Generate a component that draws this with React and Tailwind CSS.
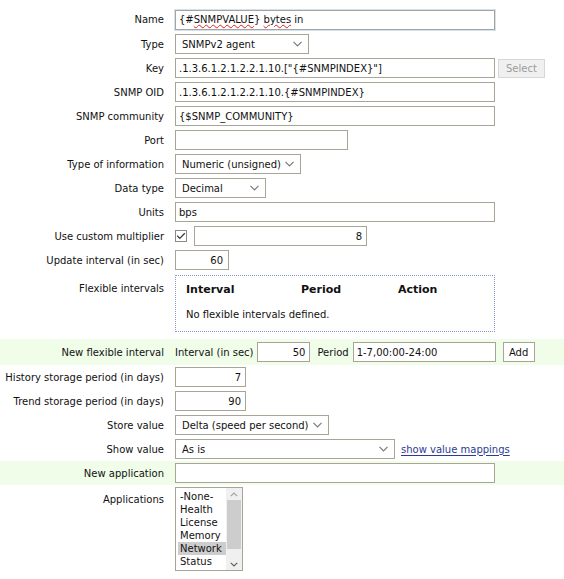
import React from "react";

const inputCls =
  "h-[20px] border border-[#a9a596] bg-white px-[3px] flex items-center text-[#111] whitespace-nowrap overflow-hidden";

function Chevron() {
  return (
    <svg width="9" height="6" viewBox="0 0 9 6" className="shrink-0">
      <path d="M0.5 0.8 L4.5 4.8 L8.5 0.8" fill="none" stroke="#7a7a7a" strokeWidth="1.2" />
    </svg>
  );
}

function Select({ w, children }) {
  return (
    <div className={`${inputCls} ${w} pl-[6px] pr-[6px] justify-between`}>
      <span>{children}</span>
      <Chevron />
    </div>
  );
}

function Row({ label, children, green, top, h = "h-[24px]", lpt = "" }) {
  return (
    <div className={`flex ${top ? "items-start" : "items-center"} ${h} ${green ? "bg-[#effde9]" : ""}`}>
      <div className={`w-[175px] shrink-0 pr-[11px] text-right text-[#111] ${lpt}`}>{label}</div>
      <div className="flex items-center">{children}</div>
    </div>
  );
}

const wavy =
  "underline decoration-wavy decoration-[#e02020] decoration-[1px] underline-offset-[1px]";

export default function App() {
  return (
    <div
      className="w-[564px] h-[579px] bg-white text-[10px] pt-[7px]"
      style={{ fontFamily: '"DejaVu Sans", Verdana, sans-serif' }}
    >
      <Row label="Name" h="h-[25px]">
        <div className={`${inputCls} w-[320px] border-[#6f9fd8] shadow-[0_0_0_1px_#d2e2f5]`}>
          <span>
            {"{#"}
            <span className={wavy}>SNMPVALUE</span>
            {"} "}
            <span className={wavy}>bytes</span>
            {" in"}
          </span>
        </div>
      </Row>
      <Row label="Type">
        <Select w="w-[134px]">SNMPv2 agent</Select>
      </Row>
      <Row label="Key">
        <div className={`${inputCls} w-[320px]`}>.1.3.6.1.2.1.2.2.1.10.["{"{#SNMPINDEX}"}"]</div>
        <div className="ml-[3px] h-[19px] px-[7px] flex items-center border border-[#d6d6d6] bg-[#f0f0f0] text-[#9b9b9b]">
          Select
        </div>
      </Row>
      <Row label="SNMP OID">
        <div className={`${inputCls} w-[320px]`}>.1.3.6.1.2.1.2.2.1.10.{"{#SNMPINDEX}"}</div>
      </Row>
      <Row label="SNMP community">
        <div className={`${inputCls} w-[320px]`}>{"{$SNMP_COMMUNITY}"}</div>
      </Row>
      <Row label="Port">
        <div className={`${inputCls} w-[173px]`}></div>
      </Row>
      <Row label="Type of information">
        <Select w="w-[126px]">Numeric (unsigned)</Select>
      </Row>
      <Row label="Data type">
        <Select w="w-[91px]">Decimal</Select>
      </Row>
      <Row label="Units">
        <div className={`${inputCls} w-[320px]`}>bps</div>
      </Row>
      <Row label="Use custom multiplier">
        <div className="w-[12px] h-[12px] border border-[#8a8a8a] bg-white flex items-center justify-center">
          <svg width="10" height="8" viewBox="0 0 10 8">
            <path d="M1.2 3.8 L3.8 6.4 L8.8 1.2" fill="none" stroke="#3a3a3a" strokeWidth="1.3" />
          </svg>
        </div>
        <div className={`${inputCls} ml-[7px] w-[173px] justify-end pr-[4px]`}>8</div>
      </Row>
      <Row label="Update interval (in sec)">
        <div className={`${inputCls} w-[54px] justify-end pr-[5px]`}>60</div>
      </Row>
      <Row label="Flexible intervals" top h="h-[67px]" lpt="pt-[9px]">
        <div className="mt-[3px] w-[320px] h-[57px] border border-dotted border-[#8797d2] pl-[10px] pt-[7px]">
          <div className="flex font-bold text-[11px] text-[#111] h-[14px] items-center">
            <span className="w-[115px]">Interval</span>
            <span className="w-[97px]">Period</span>
            <span>Action</span>
          </div>
          <div className="mt-[10px] text-[#111]">No flexible intervals defined.</div>
        </div>
      </Row>
      <Row label="New flexible interval" green h="h-[26px]">
        <span className="text-[#111]">Interval (in sec)</span>
        <div className={`${inputCls} ml-[4px] w-[53px] justify-end pr-[4px]`}>50</div>
        <span className="ml-[7px] text-[#111]">Period</span>
        <div className={`${inputCls} ml-[4px] w-[143px]`}>1-7,00:00-24:00</div>
        <div className="ml-[7px] h-[20px] w-[32px] flex items-center justify-center border border-[#a9a596] bg-white text-[#111]">
          Add
        </div>
      </Row>
      <Row label="History storage period (in days)">
        <div className={`${inputCls} w-[71px] justify-end pr-[4px]`}>7</div>
      </Row>
      <Row label="Trend storage period (in days)">
        <div className={`${inputCls} w-[71px] justify-end pr-[4px]`}>90</div>
      </Row>
      <Row label="Store value">
        <Select w="w-[154px]">Delta (speed per second)</Select>
      </Row>
      <Row label="Show value">
        <Select w="w-[220px]">As is</Select>
        <a className="ml-[6px] text-[#2d3a94] underline underline-offset-[2px]">show value mappings</a>
      </Row>
      <Row label="New application" green>
        <div className={`${inputCls} w-[320px]`}></div>
      </Row>
      <Row label="Applications" top h="h-[86px]" lpt="pt-[7px]">
        <div className="mt-[2px] w-[68px] h-[84px] border border-[#a9a596] bg-white flex">
          <div className="flex-1 pl-[2px] pt-[2px] text-[#111] leading-[13px]">
            <div className="pl-[2px]">-None-</div>
            <div className="pl-[2px]">Health</div>
            <div className="pl-[2px]">License</div>
            <div className="pl-[2px]">Memory</div>
            <div className="pl-[2px] bg-[#cdcdcd]">Network</div>
            <div className="pl-[2px]">Status</div>
          </div>
          <div className="w-[16px] bg-[#f0f0f0] flex flex-col items-center">
            <div className="h-[12px] flex items-center">
              <svg width="8" height="5" viewBox="0 0 8 5">
                <path d="M0.8 4.2 L4 1 L7.2 4.2" fill="none" stroke="#a3a3a3" strokeWidth="1.2" />
              </svg>
            </div>
            <div className="w-[14px] h-[49px] bg-[#cdcdcd]"></div>
            <div className="flex-1"></div>
            <div className="h-[12px] flex items-center">
              <svg width="8" height="5" viewBox="0 0 8 5">
                <path d="M0.8 0.8 L4 4 L7.2 0.8" fill="none" stroke="#606060" strokeWidth="1.2" />
              </svg>
            </div>
          </div>
        </div>
      </Row>
    </div>
  );
}
